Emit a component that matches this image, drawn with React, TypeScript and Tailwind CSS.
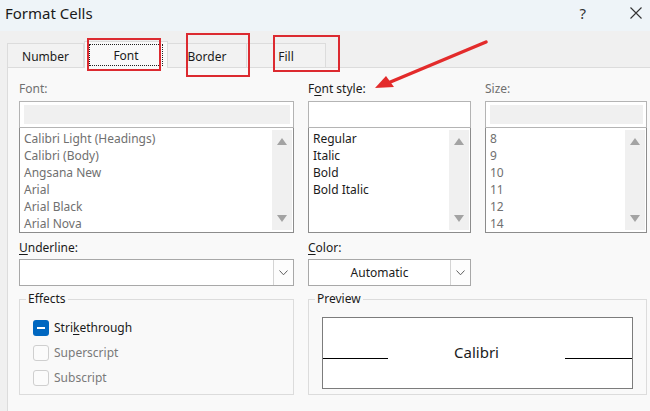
import React from "react";

const FONT = "font-['Noto_Sans',_'Open_Sans',_sans-serif]";

function UpArrow() {
  return (
    <svg width="10" height="7" viewBox="0 0 10 7">
      <polygon points="5,0 10,7 0,7" fill="#a3a3a3" />
    </svg>
  );
}
function DownArrow() {
  return (
    <svg width="10" height="7" viewBox="0 0 10 7">
      <polygon points="0,0 10,0 5,7" fill="#a3a3a3" />
    </svg>
  );
}

function Scrollbar() {
  return (
    <div className="w-[20px] my-[2px] mr-[1px] bg-[#f0f0f0] flex flex-col items-center justify-between py-[8px]">
      <UpArrow />
      <DownArrow />
    </div>
  );
}

function ListBox({ items, gray }: { items: string[]; gray?: boolean }) {
  return (
    <div className="h-[105px] border border-t-0 border-[#8c8c8c] bg-white flex">
      <div className={`flex-1 pl-[4px] pt-[2px] leading-[17px] overflow-hidden ${gray ? "text-[#707070]" : "text-[#1b1b1b]"}`}>
        {items.map((t) => (
          <div key={t} className="whitespace-nowrap">{t}</div>
        ))}
      </div>
      <Scrollbar />
    </div>
  );
}

function Chevron() {
  return (
    <svg width="9" height="6" viewBox="0 0 9 6">
      <polyline points="0.5,0.5 4.5,4.8 8.5,0.5" fill="none" stroke="#606060" strokeWidth="1" />
    </svg>
  );
}

function Select({ value }: { value?: string }) {
  return (
    <div className="h-[27px] border border-[#a8a8a8] bg-white flex">
      <div className="flex-1 flex items-center justify-center text-[#1b1b1b]">{value}</div>
      <div className="w-[20px] border-l border-[#d4d4d4] flex items-center justify-center bg-[#fdfdfd]">
        <Chevron />
      </div>
    </div>
  );
}

function CheckRow({ label, checked }: { label: React.ReactNode; checked?: boolean }) {
  return (
    <div className="h-[25px] flex items-center gap-[5px]">
      {checked ? (
        <div className="w-[16px] h-[16px] rounded-[3px] bg-[#0067c0] flex items-center justify-center">
          <div className="w-[8px] h-[2px] bg-white" />
        </div>
      ) : (
        <div className="w-[16px] h-[16px] rounded-[3px] border border-[#cfcfcf] bg-[#fbfbfb]" />
      )}
      <span className={checked ? "text-[#1b1b1b]" : "text-[#7a7a7a]"}>{label}</span>
    </div>
  );
}

export default function App() {
  return (
    <div className={`relative w-[650px] h-[411px] overflow-hidden bg-[#f0f0f0] text-[12px] ${FONT} flex flex-col`}>
      {/* Title bar */}
      <div className="h-[31px] bg-[#eef4f8] flex items-start pt-[4px] pl-[5px] pr-[5px]">
        <div className="text-[15px] leading-[18px] text-[#1a1a1a]">Format Cells</div>
        <div className="flex-1" />
        <div className="text-[15px] leading-[18px] text-[#333] mr-[44px]">?</div>
        <svg width="12" height="12" viewBox="0 0 12 12" className="mt-[3px] mr-[3px]">
          <path d="M0.5 0.5 L11.5 11.5 M11.5 0.5 L0.5 11.5" stroke="#333" strokeWidth="1.1" />
        </svg>
      </div>

      {/* Tabs */}
      <div className="h-[36px] flex items-end pl-[7px] relative z-10">
        <div className="w-[77px] h-[24px] border border-b-0 border-[#dcdcdc] bg-[#f2f2f2] flex items-center justify-center pt-[3px] text-[#1b1b1b]">
          Number
        </div>
        <div className="w-[84px] h-[27px] -mb-px bg-[#f9f9f9] border border-b-0 border-[#dcdcdc] flex items-start justify-center pt-[1px]">
          <div className="w-[74px] h-[22px] mt-[1px] border border-dotted border-[#222] flex items-center justify-center pt-[1px] text-[#1b1b1b]">
            Font
          </div>
        </div>
        <div className="w-[79px] h-[24px] border border-l-0 border-b-0 border-[#dcdcdc] bg-[#f2f2f2] flex items-center justify-center pt-[3px] text-[#1b1b1b]">
          Border
        </div>
        <div className="w-[79px] h-[24px] border border-l-0 border-b-0 border-[#dcdcdc] bg-[#f2f2f2] flex items-center justify-center pt-[3px] text-[#1b1b1b]">
          Fill
        </div>
      </div>

      {/* Panel */}
      <div className="flex-1 ml-[7px] border-t border-l border-[#dcdcdc] bg-[#f9f9f9] pl-[11px] pt-[13px]">
        <div className="grid grid-cols-[275px_163px_162px] gap-x-[14px]">
          {/* Font */}
          <div className="flex flex-col">
            <div className="h-[16px] leading-[16px] text-[#707070]">Font:</div>
            <div className="mt-[4px] h-[27px] border border-[#b4b4b4] bg-white p-[3px] pl-[4px] pr-[3px]">
              <div className="w-full h-full bg-[#f0f0f0]" />
            </div>
            <ListBox
              gray
              items={["Calibri Light (Headings)", "Calibri (Body)", "Angsana New", "Arial", "Arial Black", "Arial Nova"]}
            />
          </div>
          {/* Font style */}
          <div className="flex flex-col">
            <div className="h-[16px] leading-[16px] text-[#1b1b1b]">
              F<span className="underline underline-offset-2">o</span>nt style:
            </div>
            <div className="mt-[4px] h-[27px] border border-[#b4b4b4] bg-white" />
            <ListBox items={["Regular", "Italic", "Bold", "Bold Italic"]} />
          </div>
          {/* Size */}
          <div className="flex flex-col">
            <div className="h-[16px] leading-[16px] text-[#707070]">Size:</div>
            <div className="mt-[4px] h-[27px] border border-[#b4b4b4] bg-white p-[3px] pl-[4px] pr-[3px]">
              <div className="w-full h-full bg-[#f0f0f0]" />
            </div>
            <ListBox gray items={["8", "9", "10", "11", "12", "14"]} />
          </div>
        </div>

        <div className="grid grid-cols-[275px_163px_162px] gap-x-[14px] mt-[7px]">
          <div className="flex flex-col">
            <div className="h-[16px] leading-[16px] text-[#1b1b1b]">
              <span className="underline underline-offset-2">U</span>nderline:
            </div>
            <div className="mt-[3px]">
              <Select />
            </div>
          </div>
          <div className="flex flex-col">
            <div className="h-[16px] leading-[16px] text-[#1b1b1b]">
              <span className="underline underline-offset-2">C</span>olor:
            </div>
            <div className="mt-[3px]">
              <Select value="Automatic" />
            </div>
          </div>
        </div>

        <div className="grid grid-cols-[275px_163px_162px] gap-x-[14px] mt-[5px]">
          <fieldset className="h-[104px] border border-[#dcdcdc]">
            <legend className="ml-[6px] px-[2px] leading-[16px] text-[#1b1b1b]">Effects</legend>
            <div className="pt-[8px] pl-[13px]">
              <CheckRow
                checked
                label={
                  <>
                    Stri<span className="underline underline-offset-2">k</span>ethrough
                  </>
                }
              />
              <CheckRow label="Superscript" />
              <CheckRow label="Subscript" />
            </div>
          </fieldset>
          <fieldset className="col-span-2 h-[104px] border border-[#dcdcdc]">
            <legend className="ml-[6px] px-[2px] leading-[16px] text-[#1b1b1b]">Preview</legend>
            <div className="mt-[10px] mx-[13px] h-[72px] border border-[#7c7c7c] bg-white flex items-center">
              <div className="w-[65px] h-px bg-black mt-[10px]" />
              <div className="flex-1 text-center text-[15px] text-[#1b1b1b] -mt-[1px]">Calibri</div>
              <div className="w-[67px] h-px bg-black mt-[10px]" />
            </div>
          </fieldset>
        </div>
      </div>

      {/* Annotation overlays */}
      <div className="absolute left-[87px] top-[38px] w-[74px] h-[33px] border-2 border-[#dc2a30] pointer-events-none z-20" />
      <div className="absolute left-[186px] top-[33px] w-[64px] h-[44px] border-2 border-[#dc2a30] pointer-events-none z-20" />
      <div className="absolute left-[273px] top-[35px] w-[67px] h-[37px] border-2 border-[#dc2a30] pointer-events-none z-20" />
      <svg className="absolute left-0 top-0 pointer-events-none z-20" width="650" height="411" viewBox="0 0 650 411">
        <line x1="486" y1="42" x2="388" y2="83" stroke="#e32b2b" strokeWidth="3.5" strokeLinecap="round" />
        <polygon points="375,88 386,76 394,87" fill="#e32b2b" />
      </svg>
    </div>
  );
}
